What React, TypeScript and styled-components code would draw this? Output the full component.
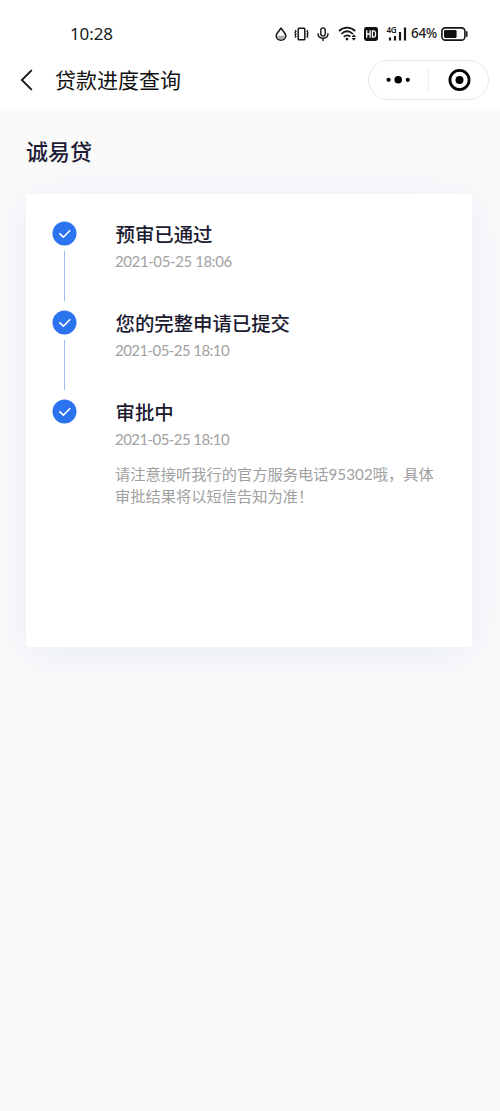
import React from 'react';
import styled, { createGlobalStyle } from 'styled-components';

const GlobalStyle = createGlobalStyle`
  * { box-sizing: border-box; }
  body {
    margin: 0;
    background: #fafafb;
    font-family: Lato, "Noto Sans CJK SC", sans-serif;
  }
`;

const Page = styled.div`
  min-height: 1111px;
  background: #fafafb;
  overflow: hidden;
`;

const Top = styled.header`
  height: 109px;
  background: #fff;
`;

const StatusBar = styled.div`
  display: flex;
  align-items: center;
  justify-content: space-between;
  height: 50px;
  padding: 17px 32px 0 70px;
  color: #1a1a1a;
  font-family: "Noto Sans", sans-serif;
`;

const Clock = styled.span`
  font-size: 17px;
  line-height: 33px;
  letter-spacing: -0.1px;
`;

const Indicators = styled.div`
  display: flex;
  align-items: center;
  height: 33px;
  svg { display: block; flex: none; }
`;

const Slot = styled.div<{ $gap: number }>`
  margin-left: ${(p) => p.$gap}px;
`;

const Percent = styled.span`
  width: 27px;
  margin: 0 3px 0 4px;
  font-size: 13.5px;
  font-weight: 500;
  line-height: 33px;
  letter-spacing: -0.3px;
  white-space: nowrap;
`;

const NavBar = styled.nav`
  display: flex;
  align-items: center;
  height: 59px;
  padding: 0 11px 0 19px;
`;

const BackIcon = styled.svg`
  display: block;
  width: 16px;
  height: 24px;
`;

const NavTitle = styled.h1`
  flex: 1;
  margin: 0 0 0 20px;
  color: #111;
  font-size: 21px;
  font-weight: 400;
  line-height: 30px;
`;

const Capsule = styled.div`
  display: flex;
  align-items: center;
  width: 121px;
  height: 40px;
  border: 1px solid #e9e9e9;
  border-radius: 20px;
  background: #fff;
`;

const CapsuleHalf = styled.div`
  display: flex;
  flex: 1;
  align-items: center;
  justify-content: center;
`;

const Divider = styled.div`
  width: 1px;
  height: 25px;
  background: #ececec;
`;

const Content = styled.main`
  padding: 26px 28px 0 26px;
`;

const Product = styled.h2`
  margin: 0 0 26px;
  color: #1e1d35;
  font-size: 22px;
  font-weight: 500;
  line-height: 33px;
`;

const Card = styled.section`
  height: 453px;
  padding: 27px 26px;
  border-radius: 4px;
  background: #fff;
  box-shadow: 0 6px 44px rgba(70, 120, 200, 0.1);
`;

const Step = styled.div`
  display: flex;
  min-height: 89px;
`;

const Rail = styled.div`
  display: flex;
  flex-direction: column;
  align-items: center;
  width: 25px;
  margin-right: 38px;
`;

const Line = styled.div`
  width: 1px;
  height: 50px;
  margin-top: 5px;
  background: #9dbcf0;
`;

const Body = styled.div`
  flex: 1;
`;

const StepTitle = styled.h3`
  margin: 0 0 0 0.5px;
  color: #1b1a30;
  font-size: 19.4px;
  font-weight: 500;
  line-height: 28px;
`;

const Time = styled.time<{ $tracking: number }>`
  display: block;
  margin-top: 1px;
  color: #a2a2a2;
  font-size: 15px;
  line-height: 22px;
  letter-spacing: ${(p) => p.$tracking}px;
`;

const Note = styled.p`
  width: 330px;
  margin: 13px 0 0;
  color: #a0a0a0;
  font-size: 15.25px;
  line-height: 22px;
`;

const CheckDot = () => (
  <svg width="25" height="25" viewBox="0 0 25 25">
    <circle cx="12.5" cy="12.4" r="12" fill="#2b73ef" />
    <path d="M7.4 12.4l4 3.8 6.8-6.9" fill="none" stroke="#fff" strokeWidth="1.6" />
  </svg>
);

const steps = [
  { title: '预审已通过', time: '2021-05-25 18:06', tracking: -0.4 },
  { title: '您的完整申请已提交', time: '2021-05-25 18:10', tracking: -0.57 },
  {
    title: '审批中',
    time: '2021-05-25 18:10',
    tracking: -0.57,
    note: ['请注意接听我行的官方服务电话95302哦，具体', '审批结果将以短信告知为准！'],
  },
];

const DropIcon = () => (
  <svg width="12" height="14" viewBox="0 0 12 14">
    <path d="M6 1.2C4.6 3.4 1.2 6 1.2 8.8a4.8 4.4 0 0 0 9.6 0C10.8 6 7.4 3.4 6 1.2z" fill="none" stroke="#161616" strokeWidth="1.5" />
    <path d="M2.2 8.8h7.6a3.8 3.5 0 0 1-7.6 0z" fill="#aaa" />
  </svg>
);

const VibrateIcon = () => (
  <svg width="15" height="14" viewBox="0 0 15 14" fill="none" stroke="#161616">
    <rect x="4.2" y="1.2" width="6.6" height="11.6" rx="0.8" strokeWidth="1.5" />
    <path d="M1 3.2l1 1.2-1 1.2 1 1.3-1 1.2 1 1.3-1 1.2M14 3.2l-1 1.2 1 1.2-1 1.3 1 1.2-1 1.3 1 1.2" strokeWidth="1.2" />
  </svg>
);

const MicIcon = () => (
  <svg width="12" height="14" viewBox="0 0 12 14" fill="none" stroke="#161616" strokeWidth="1.4">
    <rect x="3.8" y="0.9" width="4.4" height="8" rx="2.2" />
    <path d="M1 6.2c0 3.3 2 5 5 5s5-1.7 5-5M6 11.2V14" />
  </svg>
);

const WifiIcon = () => (
  <svg width="20" height="15" viewBox="0 0 20 15">
    <g fill="none" stroke="#161616" strokeWidth="1.7">
      <path d="M1 5C5.8 .6 12.4 .6 17.2 5" />
      <path d="M3.3 8c3.6-3.4 8-3.4 11.6 0" />
      <path d="M5.8 10.8c2.1-1.9 4.4-1.9 6.4-.3" />
    </g>
    <circle cx="9" cy="13.1" r="1.4" fill="#161616" />
    <path d="M13.6 10.9l2.2-2.6 2.2 2.6zM13.6 12.1l2.2 2.6 2.2-2.6z" fill="#161616" />
  </svg>
);

const HdIcon = () => (
  <svg width="14" height="14" viewBox="0 0 14 14">
    <rect width="14" height="14" rx="2.4" fill="#111" />
    <path d="M2.7 3.2v7.6M6.1 3.2v7.6M2.7 7h3.4M8.4 3.8v6.4h.8c1.7 0 2.4-1 2.4-3.2s-.7-3.2-2.4-3.2z" fill="none" stroke="#fff" strokeWidth="1.3" />
  </svg>
);

const SignalIcon = () => (
  <svg width="21" height="18" viewBox="0 0 21 18">
    <text x="0.5" y="8.4" fontFamily="Noto Sans" fontSize="8" fontWeight="600" textLength="10" fill="#161616">4G</text>
    <path d="M4 12.6V15.6M9 11V15.6M14 7V15.6M19 2.4V15.6" fill="none" stroke="#161616" strokeWidth="2.2" />
  </svg>
);

const BatteryIcon = () => (
  <svg width="27" height="14" viewBox="0 0 27 14">
    <rect x="0.9" y="0.9" width="23" height="12.2" rx="3.4" fill="none" stroke="#161616" strokeWidth="1.6" />
    <rect x="3" y="3" width="12.6" height="8" rx="1.4" fill="#111" />
    <path d="M25.8 4.8v4.4" stroke="#161616" strokeWidth="1.5" strokeLinecap="round" />
  </svg>
);

export default function App() {
  return (
    <Page>
      <GlobalStyle />
      <Top>
        <StatusBar>
          <Clock>10:28</Clock>
          <Indicators>
            <Slot $gap={0}><DropIcon /></Slot>
            <Slot $gap={7}><VibrateIcon /></Slot>
            <Slot $gap={8}><MicIcon /></Slot>
            <Slot $gap={9}><WifiIcon /></Slot>
            <Slot $gap={6}><HdIcon /></Slot>
            <Slot $gap={8}><SignalIcon /></Slot>
            <Percent>64%</Percent>
            <BatteryIcon />
          </Indicators>
        </StatusBar>
        <NavBar>
          <BackIcon viewBox="0 0 16 24">
            <path d="M12.8 2.2L2.8 12l10 9.8" fill="none" stroke="#111" strokeWidth="1.8" />
          </BackIcon>
          <NavTitle>贷款进度查询</NavTitle>
          <Capsule>
            <CapsuleHalf>
              <svg width="26" height="10" viewBox="0 0 26 10">
                <circle cx="2.6" cy="4.8" r="2.1" />
                <circle cx="12.2" cy="4.8" r="3.8" />
                <circle cx="21.8" cy="4.8" r="2.1" />
              </svg>
            </CapsuleHalf>
            <Divider />
            <CapsuleHalf>
              <svg width="24" height="24" viewBox="0 0 24 24">
                <circle cx="12.5" cy="12" r="9.6" fill="none" stroke="#000" strokeWidth="2.8" />
                <circle cx="12.5" cy="12" r="4" />
              </svg>
            </CapsuleHalf>
          </Capsule>
        </NavBar>
      </Top>
      <Content>
        <Product>诚易贷</Product>
        <Card>
          {steps.map((step, i) => (
            <Step key={step.title}>
              <Rail>
                <CheckDot />
                {i < steps.length - 1 && <Line />}
              </Rail>
              <Body>
                <StepTitle>{step.title}</StepTitle>
                <Time $tracking={step.tracking}>{step.time}</Time>
                {step.note && (
                  <Note>
                    {step.note[0]}
                    <br />
                    {step.note[1]}
                  </Note>
                )}
              </Body>
            </Step>
          ))}
        </Card>
      </Content>
    </Page>
  );
}
